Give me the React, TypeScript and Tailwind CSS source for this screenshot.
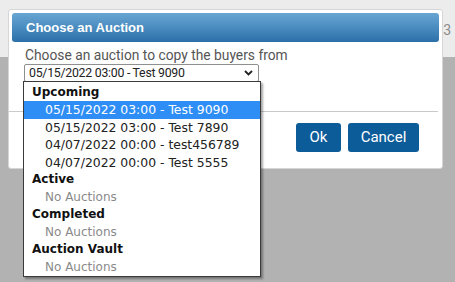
import React from "react";

const upcoming = [
  "05/15/2022 03:00 - Test 9090",
  "05/15/2022 03:00 - Test 7890",
  "04/07/2022 00:00 - test456789",
  "04/07/2022 00:00 - Test 5555",
];

const groups = [
  { label: "Upcoming", items: upcoming },
  { label: "Active", items: [] as string[] },
  { label: "Completed", items: [] as string[] },
  { label: "Auction Vault", items: [] as string[] },
];

const App = () => {
  return (
    <div className="relative w-[455px] h-[282px] overflow-hidden bg-[#b2b2b2] font-['Roboto',sans-serif]">
      {/* page behind the overlay */}
      <div className="h-[57px] bg-[#ececec] flex justify-end items-start pt-[22px] pr-[4px]">
        <span className="text-[14px] text-[#8a8a8a] leading-[16px]">3</span>
      </div>

      {/* dialog */}
      <div className="absolute left-[8px] top-[9px] w-[435px] h-[160px] bg-white border border-[#d6d6d6] rounded-[3px] p-[3px] flex flex-col">
        <div className="h-[29px] rounded-[3px] bg-gradient-to-b from-[#68a5d2] via-[#4a8cc0] to-[#2a70a8] flex items-center pl-[14px] pt-[1px]">
          <span className="text-white font-bold text-[13px] font-['Liberation_Sans',sans-serif]">
            Choose an Auction
          </span>
        </div>
        <div className="pl-[12px]">
          <div className="mt-[5px] pl-[1px] leading-[17px] text-[13.8px] text-[#555]">
            Choose an auction to copy the buyers from
          </div>
          <div className="w-[235px] h-[18px] border border-[#8f8f8f] rounded-[2px] flex items-center justify-between pl-[4px] pr-[5px] text-[12.3px] tracking-[-0.25px] text-[#222] leading-[16px]">
            <span>05/15/2022 03:00 - Test 9090</span>
            <svg width="9" height="6" viewBox="0 0 9 6" fill="none">
              <path d="M1 1l3.5 3.5L8 1" stroke="#222" strokeWidth="1.8" />
            </svg>
          </div>
        </div>
        <div className="mt-[29px] -mx-[3px] mr-[1px] h-px bg-[#c9c9c9]" />
        <div className="mt-[11px] flex justify-end gap-[7px] pr-[20px]">
          <button className="w-[45px] h-[29px] rounded-[3px] bg-[#0d5c9a] text-white text-[15px]">
            Ok
          </button>
          <button className="w-[71px] h-[29px] rounded-[3px] bg-[#0d5c9a] text-white text-[15px]">
            Cancel
          </button>
        </div>
      </div>

      {/* open select list */}
      <div className="absolute left-[23px] top-[81px] w-[238px] h-[196px] bg-white border border-[#3a3a3a] shadow-[2px_2px_2px_rgba(0,0,0,0.35)] pt-[1.5px] font-['DejaVu_Sans',sans-serif] text-[12px]">
        {groups.map((g) => (
          <div key={g.label}>
            <div className="h-[17.5px] leading-[17.5px] pl-[8px] font-bold text-[#111]">{g.label}</div>
            {g.items.length === 0 ? (
              <div className="h-[17.5px] leading-[17.5px] pl-[21px] text-[#8a8a8a]">No Auctions</div>
            ) : (
              g.items.map((it, i) => (
                <div
                  key={it}
                  className={
                    i === 0
                      ? "h-[17.5px] leading-[17.5px] pl-[21px] text-[12.4px] bg-[#2e8ef5] text-white"
                      : "h-[17.5px] leading-[17.5px] pl-[21px] text-[12.4px] text-[#222]"
                  }
                >
                  {it}
                </div>
              ))
            )}
          </div>
        ))}
      </div>
    </div>
  );
};

export default App;
